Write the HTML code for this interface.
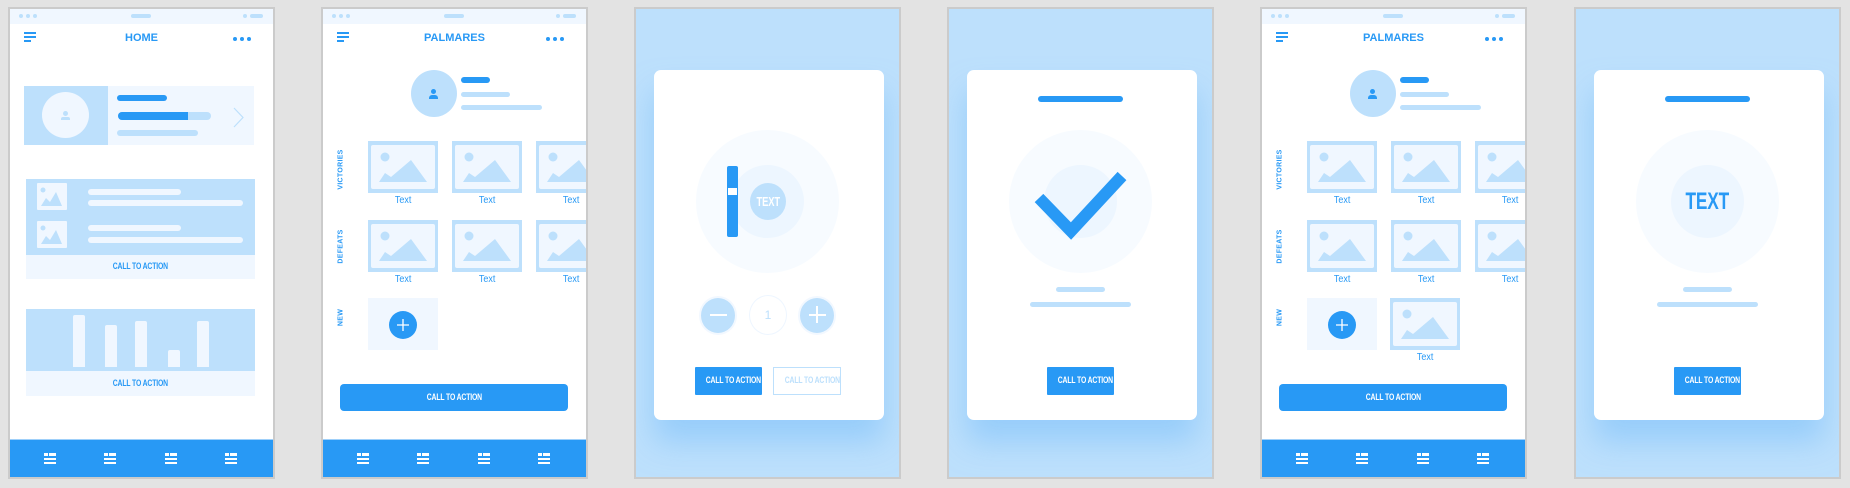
<!DOCTYPE html>
<html><head><meta charset="utf-8"><style>
*{margin:0;padding:0;box-sizing:border-box}
body{width:1850px;height:488px;background:#e3e3e3;position:relative;overflow:hidden;font-family:"Liberation Sans",sans-serif}
.ph{position:absolute;top:7px;width:267px;height:472px;border:2px solid #cbcbcb;background:#fff;overflow:hidden}
.ph.bl{background:#bde0fc}
.a{position:absolute}
.sb{left:0;top:0;width:100%;height:15px;background:#f0f7ff}
.dt{width:4px;height:4px;border-radius:50%;background:#bde0fc;top:5px}
.pl{height:4px;border-radius:2px;background:#bde0fc;top:5px}
.hb{background:#2899f5;height:1.6px;left:14px}
.ttl{top:23px;left:0;width:100%;text-align:center;font-size:11px;color:#2899f5;font-weight:bold}
.bd{width:4px;height:4px;border-radius:50%;background:#2899f5;top:28px}
.nav{left:0;top:430px;width:100%;height:40px;background:#2899f5;border-top:1px solid #9fd0fa}
.ni{width:12px;height:12px;top:13px}
.ni i{position:absolute;background:#fff;display:block}
.cta{font-weight:bold;font-size:9.5px;text-align:center;color:#2899f5;white-space:nowrap}
.cta span{display:inline-block;transform:scaleX(.72);letter-spacing:-.2px}
.lbl{font-size:7px;font-weight:bold;color:#2899f5;transform:rotate(-90deg);transform-origin:center;width:60px;text-align:center;letter-spacing:.3px}
.tt{font-size:10px;color:#2899f5;width:70px;text-align:center}
.tt span{display:inline-block;transform:scaleX(.9)}
.card{left:18px;top:61px;width:230px;height:350px;background:#fff;border-radius:7px;box-shadow:0 22px 30px rgba(120,190,250,.55)}
.circ{border-radius:50%}
</style></head><body>

<!-- PHONE 1 -->
<div class="ph" style="left:8px">
 <div class="a sb"></div>
 <div class="a dt" style="left:9px"></div><div class="a dt" style="left:16px"></div><div class="a dt" style="left:23px"></div>
 <div class="a pl" style="left:121px;width:20px"></div>
 <div class="a dt" style="left:233px"></div><div class="a pl" style="left:240px;width:13px"></div>
 <div class="a hb" style="top:23px;width:12px"></div><div class="a hb" style="top:27px;width:12px"></div><div class="a hb" style="top:31px;width:7px"></div>
 <div class="a ttl">HOME</div>
 <div class="a bd" style="left:223px"></div><div class="a bd" style="left:230px"></div><div class="a bd" style="left:237px"></div>
 <div class="a" style="left:14px;top:77px;width:230px;height:59px;background:#f0f7ff"></div>
 <div class="a" style="left:14px;top:77px;width:84px;height:59px;background:#bde0fc"></div>
 <div class="a circ" style="left:32px;top:83px;width:47px;height:46px;background:#f0f7ff"></div>
 <div class="a circ" style="left:53px;top:102px;width:5px;height:5px;background:#bde0fc"></div>
 <div class="a" style="left:51px;top:108px;width:9px;height:3px;border-radius:2px 2px 0 0;background:#bde0fc"></div>
 <div class="a" style="left:107px;top:86px;width:50px;height:6px;border-radius:3px;background:#2899f5"></div>
 <div class="a" style="left:108px;top:103px;width:93px;height:8px;border-radius:4px;background:#bde0fc"></div>
 <div class="a" style="left:108px;top:103px;width:70px;height:8px;border-radius:4px 0 0 4px;background:#2899f5"></div>
 <div class="a" style="left:107px;top:121px;width:81px;height:6px;border-radius:3px;background:#bde0fc"></div>
 <svg class="a" style="left:223px;top:98px" width="12" height="21"><polyline points="1,1 10,10.5 1,20" fill="none" stroke="#bde0fc" stroke-width="1.2"/></svg>

 <div class="a" style="left:16px;top:170px;width:229px;height:76px;background:#bde0fc"></div>
 <div class="a cta" style="left:16px;top:246px;width:229px;height:24px;line-height:24px;background:#f0f7ff"><span>CALL TO ACTION</span></div>
 <svg class="a" style="left:27px;top:174px" width="30" height="27"><rect width="30" height="27" rx="1" fill="#f0f7ff"/><circle cx="6" cy="7" r="2.5" fill="#bde0fc"/><polygon points="4,23 9,15 13,19 19,9 25,23" fill="#bde0fc"/></svg>
 <svg class="a" style="left:27px;top:212px" width="30" height="27"><rect width="30" height="27" rx="1" fill="#f0f7ff"/><circle cx="6" cy="7" r="2.5" fill="#bde0fc"/><polygon points="4,23 9,15 13,19 19,9 25,23" fill="#bde0fc"/></svg>
 <div class="a" style="left:78px;top:180px;width:93px;height:6px;border-radius:3px;background:#f0f7ff"></div>
 <div class="a" style="left:78px;top:191px;width:155px;height:6px;border-radius:3px;background:#f0f7ff"></div>
 <div class="a" style="left:78px;top:216px;width:93px;height:6px;border-radius:3px;background:#f0f7ff"></div>
 <div class="a" style="left:78px;top:228px;width:155px;height:6px;border-radius:3px;background:#f0f7ff"></div>

 <div class="a" style="left:16px;top:300px;width:229px;height:62px;background:#bde0fc"></div>
 <div class="a cta" style="left:16px;top:362px;width:229px;height:25px;line-height:25px;background:#f0f7ff"><span>CALL TO ACTION</span></div>
 <div class="a" style="left:63px;top:306px;width:12px;height:52px;border-radius:2px 2px 0 0;background:#f0f7ff"></div>
 <div class="a" style="left:95px;top:316px;width:12px;height:42px;border-radius:2px 2px 0 0;background:#f0f7ff"></div>
 <div class="a" style="left:125px;top:312px;width:12px;height:46px;border-radius:2px 2px 0 0;background:#f0f7ff"></div>
 <div class="a" style="left:158px;top:341px;width:12px;height:17px;border-radius:2px 2px 0 0;background:#f0f7ff"></div>
 <div class="a" style="left:187px;top:312px;width:12px;height:46px;border-radius:2px 2px 0 0;background:#f0f7ff"></div>

 <div class="a nav">
  <div class="a ni" style="left:34px"><i style="left:0;top:0;width:4px;height:3px"></i><i style="left:5px;top:0;width:7px;height:3px"></i><i style="left:0;top:5px;width:12px;height:2px"></i><i style="left:0;top:9px;width:12px;height:2px"></i></div>
  <div class="a ni" style="left:94px"><i style="left:0;top:0;width:4px;height:3px"></i><i style="left:5px;top:0;width:7px;height:3px"></i><i style="left:0;top:5px;width:12px;height:2px"></i><i style="left:0;top:9px;width:12px;height:2px"></i></div>
  <div class="a ni" style="left:155px"><i style="left:0;top:0;width:4px;height:3px"></i><i style="left:5px;top:0;width:7px;height:3px"></i><i style="left:0;top:5px;width:12px;height:2px"></i><i style="left:0;top:9px;width:12px;height:2px"></i></div>
  <div class="a ni" style="left:215px"><i style="left:0;top:0;width:4px;height:3px"></i><i style="left:5px;top:0;width:7px;height:3px"></i><i style="left:0;top:5px;width:12px;height:2px"></i><i style="left:0;top:9px;width:12px;height:2px"></i></div>
 </div>
</div>

<!-- PHONE 2 -->
<div class="ph" style="left:321px">
 <div class="a sb"></div>
 <div class="a dt" style="left:9px"></div><div class="a dt" style="left:16px"></div><div class="a dt" style="left:23px"></div>
 <div class="a pl" style="left:121px;width:20px"></div>
 <div class="a dt" style="left:233px"></div><div class="a pl" style="left:240px;width:13px"></div>
 <div class="a hb" style="top:23px;width:12px"></div><div class="a hb" style="top:27px;width:12px"></div><div class="a hb" style="top:31px;width:7px"></div>
 <div class="a ttl">PALMARES</div>
 <div class="a bd" style="left:223px"></div><div class="a bd" style="left:230px"></div><div class="a bd" style="left:237px"></div>
 <div class="a circ" style="left:88px;top:61px;width:46px;height:47px;background:#bde0fc"></div>
 <div class="a circ" style="left:108px;top:80px;width:5px;height:5px;background:#2899f5"></div>
 <div class="a" style="left:106px;top:86px;width:9px;height:4px;border-radius:3px 3px 0 0;background:#2899f5"></div>
 <div class="a" style="left:138px;top:68px;width:29px;height:6px;border-radius:3px;background:#2899f5"></div>
 <div class="a" style="left:138px;top:83px;width:49px;height:5px;border-radius:3px;background:#bde0fc"></div>
 <div class="a" style="left:138px;top:96px;width:81px;height:5px;border-radius:3px;background:#bde0fc"></div>
 <div class="a lbl" style="left:-12px;top:157px">VICTORIES</div>
 <div class="a lbl" style="left:-12px;top:234px">DEFEATS</div>
 <div class="a lbl" style="left:-12px;top:305px">NEW</div>
 <svg class="a" style="left:45px;top:132px" width="240" height="150">
  <defs><g id="tl"><rect width="70" height="52" fill="#bde0fc"/><rect x="3" y="4" width="64" height="44" rx="2" fill="#f0f7ff"/><circle cx="17" cy="16" r="4.5" fill="#bde0fc"/><polygon points="11,41 17,32 23,36 43,19 59,41" fill="#bde0fc"/></g></defs>
  <use href="#tl" x="0" y="0"/><use href="#tl" x="84" y="0"/><use href="#tl" x="168" y="0"/>
  <use href="#tl" x="0" y="79"/><use href="#tl" x="84" y="79"/><use href="#tl" x="168" y="79"/>
 </svg>
 <div class="a tt" style="left:45px;top:186px"><span>Text</span></div><div class="a tt" style="left:129px;top:186px"><span>Text</span></div><div class="a tt" style="left:213px;top:186px"><span>Text</span></div>
 <div class="a tt" style="left:45px;top:265px"><span>Text</span></div><div class="a tt" style="left:129px;top:265px"><span>Text</span></div><div class="a tt" style="left:213px;top:265px"><span>Text</span></div>
 <div class="a" style="left:45px;top:289px;width:70px;height:52px;background:#f0f7ff"></div>
 <svg class="a" style="left:66px;top:302px" width="28" height="28"><circle cx="14" cy="14" r="14" fill="#2899f5"/><path d="M14 8v12M8 14h12" stroke="#fff" stroke-width="1.3"/></svg>
 <div class="a cta" style="left:17px;top:375px;width:228px;height:27px;line-height:27px;border-radius:4px;background:#2899f5;color:#fff"><span>CALL TO ACTION</span></div>
 <div class="a nav">
  <div class="a ni" style="left:34px"><i style="left:0;top:0;width:4px;height:3px"></i><i style="left:5px;top:0;width:7px;height:3px"></i><i style="left:0;top:5px;width:12px;height:2px"></i><i style="left:0;top:9px;width:12px;height:2px"></i></div>
  <div class="a ni" style="left:94px"><i style="left:0;top:0;width:4px;height:3px"></i><i style="left:5px;top:0;width:7px;height:3px"></i><i style="left:0;top:5px;width:12px;height:2px"></i><i style="left:0;top:9px;width:12px;height:2px"></i></div>
  <div class="a ni" style="left:155px"><i style="left:0;top:0;width:4px;height:3px"></i><i style="left:5px;top:0;width:7px;height:3px"></i><i style="left:0;top:5px;width:12px;height:2px"></i><i style="left:0;top:9px;width:12px;height:2px"></i></div>
  <div class="a ni" style="left:215px"><i style="left:0;top:0;width:4px;height:3px"></i><i style="left:5px;top:0;width:7px;height:3px"></i><i style="left:0;top:5px;width:12px;height:2px"></i><i style="left:0;top:9px;width:12px;height:2px"></i></div>
 </div>
</div>

<!-- PHONE 3 -->
<div class="ph bl" style="left:634px">
 <div class="a card"></div>
 <div class="a circ" style="left:60px;top:121px;width:143px;height:143px;background:#f7fbff"></div>
 <div class="a circ" style="left:95px;top:156px;width:73px;height:73px;background:#edf6ff"></div>
 <div class="a circ cta" style="left:114px;top:174px;width:36px;height:37px;background:#bde0fc;color:#fff;font-size:13px;line-height:37px"><span>TEXT</span></div>
 <div class="a" style="left:91px;top:157px;width:11px;height:71px;border-radius:2px;background:#2899f5"></div>
 <div class="a" style="left:92px;top:179px;width:9px;height:7px;background:#fff"></div>
 <div class="a circ" style="left:63px;top:287px;width:38px;height:39px;background:#bde0fc;border:2px solid #f2f8ff"></div>
 <div class="a" style="left:74px;top:305px;width:17px;height:2px;background:#fff"></div>
 <div class="a circ" style="left:113px;top:286px;width:38px;height:40px;background:#fff;border:1px solid #eef6ff;color:#bde0fc;font-size:12px;line-height:38px;text-align:center">1</div>
 <div class="a circ" style="left:162px;top:287px;width:38px;height:39px;background:#bde0fc;border:2px solid #f2f8ff"></div>
 <div class="a" style="left:173px;top:305px;width:17px;height:2px;background:#fff"></div>
 <div class="a" style="left:180px;top:297px;width:2px;height:17px;background:#fff"></div>
 <div class="a cta" style="left:59px;top:358px;width:67px;height:28px;line-height:28px;background:#2899f5;color:#fff;border-radius:1px"><span>CALL TO ACTION</span></div>
 <div class="a cta" style="left:137px;top:358px;width:68px;height:28px;line-height:26px;border:1.5px solid #bde0fc;color:#bde0fc"><span>CALL TO ACTION</span></div>
</div>

<!-- PHONE 4 -->
<div class="ph bl" style="left:947px">
 <div class="a card"></div>
 <div class="a" style="left:89px;top:87px;width:85px;height:6px;border-radius:3px;background:#2899f5"></div>
 <div class="a circ" style="left:60px;top:121px;width:143px;height:143px;background:#f7fbff"></div>
 <div class="a circ" style="left:95px;top:156px;width:73px;height:73px;background:#edf6ff"></div>
 <svg class="a" style="left:0;top:0" width="263" height="300"><polyline points="90,189 122,222 173,167" fill="none" stroke="#2899f5" stroke-width="12"/></svg>
 <div class="a" style="left:107px;top:278px;width:49px;height:5px;border-radius:3px;background:#bde0fc"></div>
 <div class="a" style="left:81px;top:293px;width:101px;height:5px;border-radius:3px;background:#bde0fc"></div>
 <div class="a cta" style="left:98px;top:358px;width:67px;height:28px;line-height:28px;background:#2899f5;color:#fff;border-radius:1px"><span>CALL TO ACTION</span></div>
</div>

<!-- PHONE 5 -->
<div class="ph" style="left:1260px">
 <div class="a sb"></div>
 <div class="a dt" style="left:9px"></div><div class="a dt" style="left:16px"></div><div class="a dt" style="left:23px"></div>
 <div class="a pl" style="left:121px;width:20px"></div>
 <div class="a dt" style="left:233px"></div><div class="a pl" style="left:240px;width:13px"></div>
 <div class="a hb" style="top:23px;width:12px"></div><div class="a hb" style="top:27px;width:12px"></div><div class="a hb" style="top:31px;width:7px"></div>
 <div class="a ttl">PALMARES</div>
 <div class="a bd" style="left:223px"></div><div class="a bd" style="left:230px"></div><div class="a bd" style="left:237px"></div>
 <div class="a circ" style="left:88px;top:61px;width:46px;height:47px;background:#bde0fc"></div>
 <div class="a circ" style="left:108px;top:80px;width:5px;height:5px;background:#2899f5"></div>
 <div class="a" style="left:106px;top:86px;width:9px;height:4px;border-radius:3px 3px 0 0;background:#2899f5"></div>
 <div class="a" style="left:138px;top:68px;width:29px;height:6px;border-radius:3px;background:#2899f5"></div>
 <div class="a" style="left:138px;top:83px;width:49px;height:5px;border-radius:3px;background:#bde0fc"></div>
 <div class="a" style="left:138px;top:96px;width:81px;height:5px;border-radius:3px;background:#bde0fc"></div>
 <div class="a lbl" style="left:-12px;top:157px">VICTORIES</div>
 <div class="a lbl" style="left:-12px;top:234px">DEFEATS</div>
 <div class="a lbl" style="left:-12px;top:305px">NEW</div>
 <svg class="a" style="left:45px;top:132px" width="240" height="215">
  <defs><g id="tl2"><rect width="70" height="52" fill="#bde0fc"/><rect x="3" y="4" width="64" height="44" rx="2" fill="#f0f7ff"/><circle cx="17" cy="16" r="4.5" fill="#bde0fc"/><polygon points="11,41 17,32 23,36 43,19 59,41" fill="#bde0fc"/></g></defs>
  <use href="#tl2" x="0" y="0"/><use href="#tl2" x="84" y="0"/><use href="#tl2" x="168" y="0"/>
  <use href="#tl2" x="0" y="79"/><use href="#tl2" x="84" y="79"/><use href="#tl2" x="168" y="79"/>
  <use href="#tl2" x="83" y="157"/>
 </svg>
 <div class="a tt" style="left:45px;top:186px"><span>Text</span></div><div class="a tt" style="left:129px;top:186px"><span>Text</span></div><div class="a tt" style="left:213px;top:186px"><span>Text</span></div>
 <div class="a tt" style="left:45px;top:265px"><span>Text</span></div><div class="a tt" style="left:129px;top:265px"><span>Text</span></div><div class="a tt" style="left:213px;top:265px"><span>Text</span></div>
 <div class="a tt" style="left:128px;top:343px"><span>Text</span></div>
 <div class="a" style="left:45px;top:289px;width:70px;height:52px;background:#f0f7ff"></div>
 <svg class="a" style="left:66px;top:302px" width="28" height="28"><circle cx="14" cy="14" r="14" fill="#2899f5"/><path d="M14 8v12M8 14h12" stroke="#fff" stroke-width="1.3"/></svg>
 <div class="a cta" style="left:17px;top:375px;width:228px;height:27px;line-height:27px;border-radius:4px;background:#2899f5;color:#fff"><span>CALL TO ACTION</span></div>
 <div class="a nav">
  <div class="a ni" style="left:34px"><i style="left:0;top:0;width:4px;height:3px"></i><i style="left:5px;top:0;width:7px;height:3px"></i><i style="left:0;top:5px;width:12px;height:2px"></i><i style="left:0;top:9px;width:12px;height:2px"></i></div>
  <div class="a ni" style="left:94px"><i style="left:0;top:0;width:4px;height:3px"></i><i style="left:5px;top:0;width:7px;height:3px"></i><i style="left:0;top:5px;width:12px;height:2px"></i><i style="left:0;top:9px;width:12px;height:2px"></i></div>
  <div class="a ni" style="left:155px"><i style="left:0;top:0;width:4px;height:3px"></i><i style="left:5px;top:0;width:7px;height:3px"></i><i style="left:0;top:5px;width:12px;height:2px"></i><i style="left:0;top:9px;width:12px;height:2px"></i></div>
  <div class="a ni" style="left:215px"><i style="left:0;top:0;width:4px;height:3px"></i><i style="left:5px;top:0;width:7px;height:3px"></i><i style="left:0;top:5px;width:12px;height:2px"></i><i style="left:0;top:9px;width:12px;height:2px"></i></div>
 </div>
</div>

<!-- PHONE 6 -->
<div class="ph bl" style="left:1574px">
 <div class="a card"></div>
 <div class="a" style="left:89px;top:87px;width:85px;height:6px;border-radius:3px;background:#2899f5"></div>
 <div class="a circ" style="left:60px;top:121px;width:143px;height:143px;background:#f7fbff"></div>
 <div class="a circ cta" style="left:95px;top:156px;width:73px;height:73px;background:#edf6ff;font-size:24px;line-height:73px"><span>TEXT</span></div>
 <div class="a" style="left:107px;top:278px;width:49px;height:5px;border-radius:3px;background:#bde0fc"></div>
 <div class="a" style="left:81px;top:293px;width:101px;height:5px;border-radius:3px;background:#bde0fc"></div>
 <div class="a cta" style="left:98px;top:358px;width:67px;height:28px;line-height:28px;background:#2899f5;color:#fff;border-radius:1px"><span>CALL TO ACTION</span></div>
</div>

</body></html>
